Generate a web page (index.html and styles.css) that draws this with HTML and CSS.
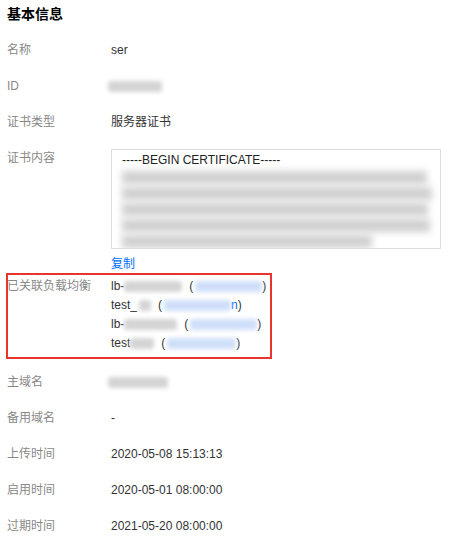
FILE: index.html
```html
<!DOCTYPE html>
<html lang="zh">
<head>
<meta charset="utf-8">
<link rel="stylesheet" href="styles.css">
</head>
<body>
<div class="page">
  <h2 class="title">基本信息</h2>
  <div class="row"><div class="label">名称</div><div class="value">ser</div></div>
  <div class="row"><div class="label">ID</div><div class="value"><span class="blur gray w54 shift"></span></div></div>
  <div class="row"><div class="label">证书类型</div><div class="value">服务器证书</div></div>
  <div class="row cert-row">
    <div class="label">证书内容</div>
    <div class="value">
      <div class="cert">
        <div class="cert-head">-----BEGIN CERTIFICATE-----</div>
        <div class="cert-body">
          <span class="cline l1"></span>
          <span class="cline l2"></span>
          <span class="cline l3"></span>
          <span class="cline l4"></span>
          <span class="cline l5"></span>
        </div>
      </div>
      <a class="copy">复制</a>
    </div>
  </div>
  <div class="row lb-row">
    <div class="label">已关联负载均衡</div>
    <div class="value lb-list">
      <div class="lb">lb-<span class="blur gray w58"></span><span class="paren">(</span><span class="blur blue w67"></span>)</div>
      <div class="lb">test_<span class="blur gray w12 gap2"></span><span class="paren">(</span><span class="blur blue w67"></span><span class="blue-t">n</span>)</div>
      <div class="lb">lb-<span class="blur gray w53"></span><span class="paren">(</span><span class="blur blue w67"></span>)</div>
      <div class="lb">test<span class="blur gray w24"></span><span class="paren">(</span><span class="blur blue w69"></span>)</div>
    </div>
  </div>
  <div class="row"><div class="label">主域名</div><div class="value"><span class="blur gray w60 shift"></span></div></div>
  <div class="row"><div class="label">备用域名</div><div class="value">-</div></div>
  <div class="row"><div class="label">上传时间</div><div class="value">2020-05-08 15:13:13</div></div>
  <div class="row"><div class="label">启用时间</div><div class="value">2020-05-01 08:00:00</div></div>
  <div class="row"><div class="label">过期时间</div><div class="value">2021-05-20 08:00:00</div></div>
</div>
</body>
</html>
```

FILE: styles.css
```css
html, body {
  margin: 0;
  padding: 0;
  background: #fff;
}
.page {
  padding: 4px 0 0 7px;
  font-family: "Liberation Sans", Arial, "Noto Sans CJK SC", sans-serif;
  font-size: 12px;
  color: #333;
}
.title {
  margin: 0 0 17px 0;
  height: 20px;
  font-size: 14px;
  line-height: 20px;
  font-weight: bold;
  color: #000;
}
.row {
  display: flex;
  height: 18px;
  line-height: 18px;
  margin-bottom: 18px;
}
.label {
  width: 104px;
  flex: none;
  color: #888;
  white-space: nowrap;
}
.value {
  flex: 1;
  color: #333;
  white-space: nowrap;
}
.blur {
  display: inline-block;
  vertical-align: middle;
  height: 11px;
  filter: blur(2px);
  border-radius: 3px;
}
.gray { background: #d4d4d4; }
.blue { background: #cfdffa; }
.w12 { width: 12px; }
.w24 { width: 24px; }
.w53 { width: 53px; }
.w54 { width: 54px; }
.w58 { width: 58px; }
.w60 { width: 60px; }
.w67 { width: 67px; }
.w69 { width: 69px; }
.gap2 { margin-left: 2px; }
.shift { margin-left: -3px; }
.cert-row {
  height: auto;
  margin-bottom: 0;
}
.cert {
  height: 100px;
  border: 1px solid #dcdcdc;
  box-sizing: border-box;
  width: 330px;
  overflow: hidden;
  padding: 3px 0 0 10px;
}
.cert-head {
  line-height: 15px;
  color: #222;
}
.cert-body {
  display: flex;
  flex-direction: column;
  gap: 3px;
  padding-top: 3px;
}
.cline {
  display: block;
  height: 13px;
  background: #d0d0d0;
  filter: blur(3.5px);
}
.l1 { width: 305px; }
.l2 { width: 310px; }
.l3 { width: 306px; }
.l4 { width: 308px; }
.l5 { width: 250px; }
.copy {
  display: block;
  color: #006eff;
  line-height: 18px;
  margin-top: 6px;
}
.lb-row {
  height: 86px;
  margin-left: -1px;
  padding: 4px 0 6px 1px;
  width: 266px;
  box-sizing: border-box;
  box-shadow: inset 0 0 0 2px #e8342a;
  line-height: 19px;
  margin-bottom: 14px;
}
.lb { height: 19px; }
.paren { margin-left: 7px; margin-right: 2px; }
.blue-t { color: #006eff; }
```
